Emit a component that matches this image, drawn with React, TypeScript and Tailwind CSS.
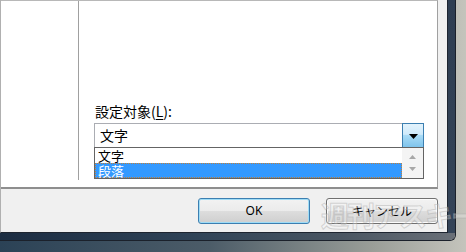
const jp = 'font-["Noto_Sans_CJK_JP","Noto_Sans",sans-serif]';

function DownArrow({ className }: { className?: string }) {
  return (
    <svg width="9" height="5" viewBox="0 0 9 5" className={className}>
      <path d="M0 0h9L4.5 5z" fill="currentColor" />
    </svg>
  );
}

function ComboBox() {
  return (
    <div className="relative w-[330px]">
      <div className="flex h-[25px] border border-[#abadb3] bg-white">
        <span className={`flex-1 pl-[5px] text-[14px] leading-[23px] text-black ${jp}`}>文字</span>
        <div className="-my-px -mr-px flex w-[22px] items-center justify-center border border-[#3c7fb1] bg-[linear-gradient(to_bottom,#e3f3fc_0%,#cfeafb_45%,#a9dbf6_50%,#7fc4ec_100%)]">
          <DownArrow className="mt-px text-black" />
        </div>
      </div>
      <div className="absolute left-0 top-[24px] flex w-[330px] border border-[#646464] bg-white">
        <div className="flex-1">
          <div className={`h-[15px] pl-[3px] text-[13px] leading-[15px] text-black ${jp}`}>文字</div>
          <div
            className={`h-[15px] border border-dotted border-[#c0803a] bg-[#3399ff] pl-[2px] text-[13px] leading-[13px] text-white ${jp}`}
          >
            段落
          </div>
        </div>
        <div className="flex w-[21px] flex-col items-center justify-around bg-[#f4f4f4] py-[3px]">
          <svg width="7" height="4" viewBox="0 0 7 4">
            <path d="M3.5 0L7 4H0z" fill="#a8a8a8" />
          </svg>
          <svg width="7" height="4" viewBox="0 0 7 4">
            <path d="M0 0h7L3.5 4z" fill="#a8a8a8" />
          </svg>
        </div>
      </div>
    </div>
  );
}

export default function App() {
  return (
    <div className="relative h-[252px] w-[466px] overflow-hidden bg-[linear-gradient(to_right,#2b4256_0%,#4c5c68_45%,#9a9e98_80%,#c4c4bc_100%)]">
      <div className="flex h-[241px] w-[456px] flex-col overflow-hidden rounded-br-[6px] border-b border-r border-[#1b212b]">
        <div className="flex min-h-0 flex-1">
          {/* client area */}
          <div className="flex w-[448px] flex-col border-b border-l border-r border-b-[#1e2530] border-l-[#b0b0b0] border-r-[#1e2530] bg-[#f0f0f0]">
            <div className="flex h-[189px] w-[437px] border-b-2 border-r border-t border-b-[#8e8e8e] border-r-[#a0a0a0] border-t-[#b8b8b8] bg-white">
              <div className="h-[179px] w-[78px] border-r border-[#a0a0a0]" />
              <div className="flex flex-col pl-[15px] pt-[102px]">
                <span className={`ml-px h-[16px] text-[14px] leading-[16px] text-black ${jp}`}>
                  設定対象(<span className="underline underline-offset-2">L</span>):
                </span>
                <div className="mt-[4px]">
                  <ComboBox />
                </div>
              </div>
            </div>
            <div className="flex gap-[16px] pl-[197px] pt-[9px]">
              <button className="h-[26px] w-[112px] rounded-[3px] border border-[#3c7fb1] bg-[linear-gradient(to_bottom,#f2f2f2_0%,#ebebeb_50%,#dddddd_51%,#cfcfcf_100%)] text-[12px] text-black shadow-[inset_0_0_0_1px_#9fdcf6] font-['Noto_Sans',sans-serif]">
                OK
              </button>
              <button
                className={`h-[26px] w-[112px] rounded-[3px] border border-[#707070] bg-[linear-gradient(to_bottom,#f2f2f2_0%,#ebebeb_50%,#dddddd_51%,#cfcfcf_100%)] text-[12px] text-black shadow-[inset_0_0_0_1px_#fcfcfc] ${jp}`}
              >
                キャンセル
              </button>
            </div>
          </div>
          {/* right glass frame */}
          <div className="w-[7px] bg-[linear-gradient(to_bottom,#2e3e52,#344458)]" />
        </div>
        {/* bottom glass frame */}
        <div className="h-[7px] shrink-0 bg-[linear-gradient(to_right,#1c2d42_0%,#2e4256_40%,#4a5662_75%,#6a7078_100%)]" />
      </div>
      {/* watermark */}
      <div
        className={`pointer-events-none absolute left-[321px] top-[199px] whitespace-nowrap text-[28px] font-bold leading-[32px] tracking-[-2px] text-white/25 [-webkit-text-stroke:1px_rgba(170,170,170,0.45)] ${jp}`}
      >
        週刊アスキー
      </div>
    </div>
  );
}
